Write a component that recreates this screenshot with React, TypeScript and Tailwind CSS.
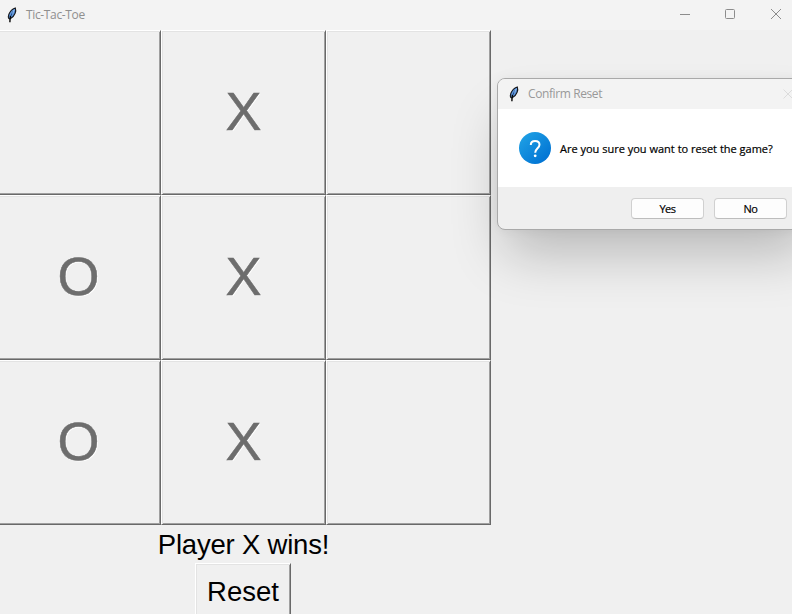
import type { ReactNode } from "react";

const board = ["", "X", "", "O", "X", "", "O", "X", ""];

const raised =
  "border-t border-l border-t-white border-l-white border-r border-b border-r-[#696969] border-b-[#696969] shadow-[inset_1px_1px_0_#e3e3e3,inset_-1px_-1px_0_#a0a0a0]";

function Feather() {
  return (
    <svg className="h-4 w-3 shrink-0" viewBox="0 0 12 16" fill="none">
      <path d="M9.300.9C6.500 1.900 3.900 4.500 2.900 7.200c-.7 1.800-.7 3.300-.1 4.300l1.400.3c2-1 3.900-3 4.900-5.600C9.800 4.500 9.900 2.500 9.300.9Z" fill="#5f98e0" stroke="#15171b" strokeWidth="1.100" />
      <path d="M7 4.300 4.300 10" stroke="#244d85" strokeWidth="1" />
      <path d="M8.200 2.800 6.400 6.500" stroke="#9cc6fa" strokeWidth=".8" />
      <path d="M4.500 8.800C4 11 3.900 13 3.900 15.200" stroke="#050505" strokeWidth="1.400" />
    </svg>
  );
}

function DialogButton({ children }: { children: ReactNode }) {
  return (
    <button className="flex h-[21px] w-[73px] items-center justify-center rounded-[4px] border border-[#d0d0d0] border-b-[#bdbdbd] bg-[#fdfdfd] text-[11px] leading-none tracking-[-0.5px] text-black [-webkit-text-stroke:0.2px_#000]">
      {children}
    </button>
  );
}

function ConfirmDialog() {
  return (
    <div className="absolute top-[78px] left-[497px] h-[152px] w-[320px] rounded-[8px] border border-[#a9a9a9] bg-[#efefef] font-['Open_Sans','Noto_Sans',sans-serif] shadow-[0_32px_54px_-8px_rgba(0,0,0,0.23),0_0_12px_rgba(0,0,0,0.05)]">
      <div className="flex h-[30px] items-center rounded-t-[7px] bg-[#f3f3f3] pl-[10px] text-[#999]">
        <Feather />
        <span className="ml-2 text-[12px] tracking-[-0.4px]">Confirm Reset</span>
        <svg className="mr-[23px] ml-auto h-[10px] w-[10px]" viewBox="0 0 10 10" stroke="#dcdcdc">
          <path d="M.5.5l9 9M9.500.5l-9 9" />
        </svg>
      </div>
      <div className="flex h-[78px] items-center bg-white pl-[21px]">
        <svg className="h-8 w-8" viewBox="0 0 32 32" fill="none">
          <defs>
            <linearGradient id="disc" x1="4" y1="3" x2="28" y2="29" gradientUnits="userSpaceOnUse">
              <stop stopColor="#1e9fe4" />
              <stop offset="1" stopColor="#0072d3" />
            </linearGradient>
          </defs>
          <circle cx="16" cy="16" r="16" fill="url(#disc)" />
          <path d="M11.800 13c0-2.500 1.700-4.100 4.300-4.100s4.400 1.500 4.400 3.800c0 3.400-4.300 3.700-4.300 8" stroke="#fff" strokeWidth="2" />
          <circle cx="16.200" cy="23.800" r="1.400" fill="#fff" />
        </svg>
        <span className="ml-[9px] pt-[2px] text-[11px] whitespace-nowrap text-black [-webkit-text-stroke:0.2px_#000]">Are you sure you want to reset the game?</span>
      </div>
      <div className="flex gap-[10px] pt-[11px] pl-[133px]">
        <DialogButton>Yes</DialogButton>
        <DialogButton>No</DialogButton>
      </div>
    </div>
  );
}

export default function App() {
  return (
    <div className="relative h-[614px] w-[792px] overflow-hidden bg-[#f0f0f0] font-['Liberation_Sans',Arial,sans-serif]">
      <header className="flex h-[30px] items-center bg-[#f3f3f3] pl-[6px] font-['Open_Sans','Noto_Sans',sans-serif] text-[#8f8f8f]">
        <Feather />
        <span className="ml-2 text-[12px] tracking-[-0.35px]">Tic-Tac-Toe</span>
        <svg className="mr-[10px] ml-auto h-3 w-[103px] -translate-y-px" viewBox="0 0 103 12" fill="none" stroke="#8c8c8c">
          <path d="M1 6.500h10" />
          <rect x="46.500" y="1.500" width="9" height="9" rx="1" />
          <path d="M92 1l10 10M102 1l-10 10" />
        </svg>
      </header>
      <main className="-ml-1 flex w-[495px] flex-col items-center">
        <div className="grid grid-cols-3">
          {board.map((mark, i) => (
            <button
              key={i}
              className={`${raised} flex h-[165px] w-[165px] items-center justify-center pb-[3px] text-[54px] leading-none text-[#6d6d6d] [-webkit-text-stroke:0.5px_#6d6d6d] [text-shadow:1px_1px_0_#fff]`}
            >
              {mark}
            </button>
          ))}
        </div>
        <p className="flex h-[38px] items-center pt-px text-[27.500px] leading-none tracking-[-0.2px] text-black">Player X wins!</p>
        <button className={`${raised} mr-px flex h-[58px] w-[96px] items-center justify-center text-[27.500px] leading-none text-black`}>Reset</button>
      </main>
      <ConfirmDialog />
    </div>
  );
}
